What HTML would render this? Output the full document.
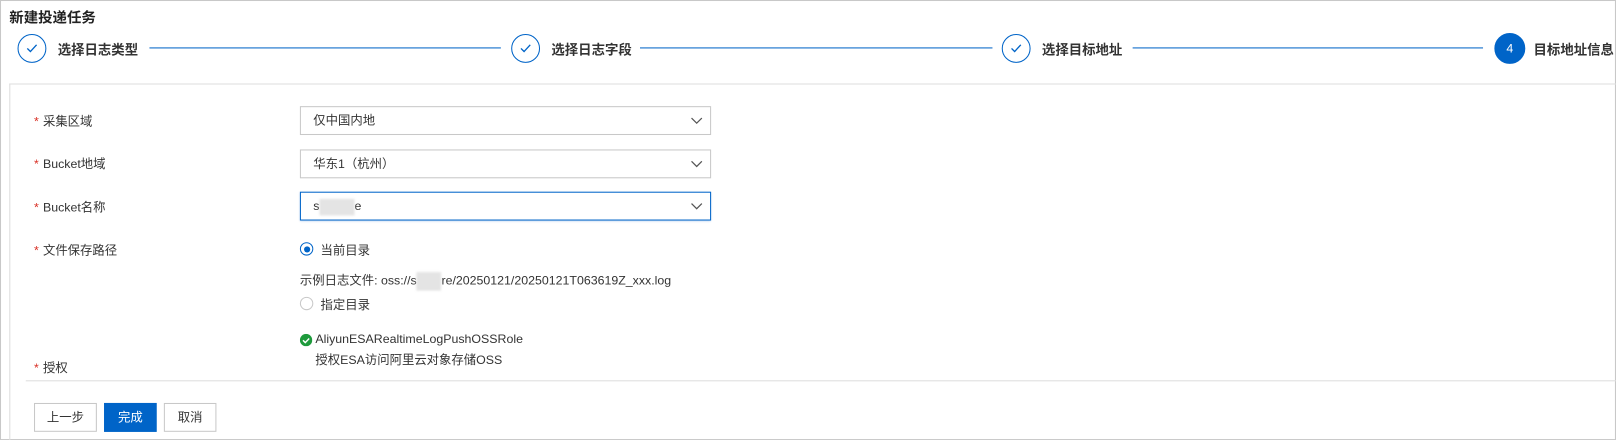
<!DOCTYPE html>
<html><head><meta charset="utf-8">
<style>
*{box-sizing:border-box;margin:0;padding:0}
body{width:1616px;height:440px;background:#fff;font-family:"Liberation Sans","Noto Sans CJK SC",sans-serif;color:#333;overflow:hidden;font-size:12px}
#w{position:absolute;left:0;top:0;width:1568px;height:427px;transform:scale(1.0306);transform-origin:0 0}
.frame{position:absolute;left:0;top:0;width:1568px;height:427px;border:1px solid #c8c8c8}
.title{position:absolute;left:9px;top:7px;font-size:14px;font-weight:bold;color:#222}
.step{position:absolute;top:32px;height:30px;display:flex;align-items:center;white-space:nowrap}
.circ{width:28px;height:28px;border-radius:50%;border:1px solid #0064c8;display:flex;align-items:center;justify-content:center;color:#0064c8;flex:none}
.circ.on{background:#0064c8;color:#fff;font-size:12px;width:30px;height:30px}
.step span{margin-left:11px;font-size:13px;font-weight:bold;color:#333}
.line{position:absolute;top:46px;height:1px;background:#0064c8}
.card{position:absolute;left:9px;top:81px;width:1559px;height:346px;border:1px solid #ddd;border-right:none;border-bottom:none}
.lab{position:absolute;left:33px;font-size:12px;color:#333}
.lab b{color:#d93026;font-weight:normal;margin-right:4px}
.sel{position:absolute;left:291px;width:399px;height:28px;border:1px solid #c8c8c8;padding-left:12px;line-height:26px;font-size:12px;color:#333}
.sel.f{border-color:#0064c8;box-shadow:0 1px 2px rgba(0,100,200,.3)}
.sel svg{position:absolute;right:7px;top:9px}
.blur{display:inline-block;width:34px;height:16px;background:#e4e4e4;vertical-align:middle;filter:blur(1px)}
.radio{position:absolute;left:291px;width:13px;height:13px;border-radius:50%;border:1px solid #c8c8c8}
.radio.on{border-color:#0064c8}
.radio.on:after{content:"";position:absolute;left:2.5px;top:2.5px;width:6px;height:6px;border-radius:50%;background:#0064c8}
.t{position:absolute;font-size:12px;color:#333;white-space:nowrap}
.btn{position:absolute;top:391px;height:28px;border:1px solid #c8c8c8;background:#fff;font-size:12px;text-align:center;line-height:26px;color:#333}
</style></head><body><div id="w">
<div class="frame"></div>
<div class="title">新建投递任务</div>

<div class="step" style="left:17px"><div class="circ"><svg width="12" height="10"><path d="M1.5 5l3 3 6-6.5" fill="none" stroke="#0064c8" stroke-width="1.3"/></svg></div><span>选择日志类型</span></div>
<div class="line" style="left:145px;width:341px"></div>
<div class="step" style="left:496px"><div class="circ"><svg width="12" height="10"><path d="M1.5 5l3 3 6-6.5" fill="none" stroke="#0064c8" stroke-width="1.3"/></svg></div><span>选择日志字段</span></div>
<div class="line" style="left:621px;width:342px"></div>
<div class="step" style="left:972px"><div class="circ"><svg width="12" height="10"><path d="M1.5 5l3 3 6-6.5" fill="none" stroke="#0064c8" stroke-width="1.3"/></svg></div><span>选择目标地址</span></div>
<div class="line" style="left:1099px;width:340px"></div>
<div class="step" style="left:1450px"><div class="circ on">4</div><span style="margin-left:8px">目标地址信息</span></div>

<div class="card"></div>

<div class="lab" style="top:109px"><b>*</b>采集区域</div>
<div class="sel" style="top:103px">仅中国内地<svg width="12" height="8"><path d="M1 1.5l5 5 5-5" fill="none" stroke="#555" stroke-width="1.2"/></svg></div>
<div class="lab" style="top:150px"><b>*</b>Bucket地域</div>
<div class="sel" style="top:145px">华东1（杭州）<svg width="12" height="8"><path d="M1 1.5l5 5 5-5" fill="none" stroke="#555" stroke-width="1.2"/></svg></div>
<div class="lab" style="top:192px"><b>*</b>Bucket名称</div>
<div class="sel f" style="top:186px">s<span class="blur"></span>e<svg width="12" height="8"><path d="M1 1.5l5 5 5-5" fill="none" stroke="#555" stroke-width="1.2"/></svg></div>

<div class="lab" style="top:234px"><b>*</b>文件保存路径</div>
<div class="radio on" style="top:235px"></div>
<div class="t" style="left:311px;top:234px">当前目录</div>
<div class="t" style="left:291px;top:263px">示例日志文件: oss://s<span class="blur" style="width:24px;height:18px"></span>re/20250121/20250121T063619Z_xxx.log</div>
<div class="radio" style="top:288px"></div>
<div class="t" style="left:311px;top:287px">指定目录</div>

<div class="lab" style="top:348px"><b>*</b>授权</div>
<svg style="position:absolute;left:291px;top:324px" width="12" height="12"><circle cx="6" cy="6" r="6" fill="#1e9a3c"/><path d="M3 6.2l2.2 2.2 3.8-4" fill="none" stroke="#fff" stroke-width="1.4"/></svg>
<div class="t" style="left:306px;top:322px">AliyunESARealtimeLogPushOSSRole</div>
<div class="t" style="left:306px;top:340px">授权ESA访问阿里云对象存储OSS</div>

<div style="position:absolute;left:25px;top:369px;width:1543px;height:1px;background:#ddd"></div>
<div class="btn" style="left:33px;width:61px">上一步</div>
<div class="btn" style="left:101px;width:51px;background:#0064c8;border-color:#0064c8;color:#fff">完成</div>
<div class="btn" style="left:159px;width:51px">取消</div>
</div></body></html>
